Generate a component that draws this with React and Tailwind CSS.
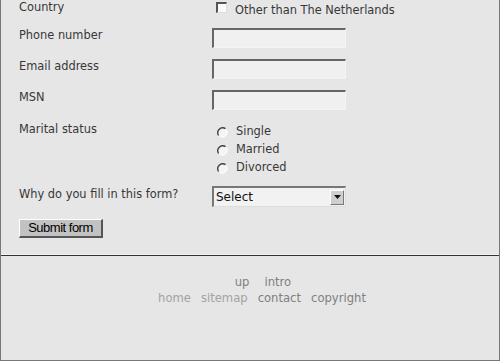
import React from 'react';

const font = { fontFamily: '"DejaVu Sans", Verdana, sans-serif' };

function TextBox() {
  return (
    <div className="w-[134px] h-[20px] bg-[#f0f0f0] border-t-2 border-l-2 border-t-[#666] border-l-[#666] border-r border-b border-r-[#f4f4f4] border-b-[#f4f4f4]" />
  );
}

function Radio({ label }) {
  return (
    <div className="flex items-center h-[18px]">
      <svg width="11" height="11" viewBox="0 0 11 11" className="ml-[5px] mr-[8px]">
        <circle cx="5.5" cy="5.5" r="5" fill="#f4f4f4" />
        <path d="M8.5 1.6 A5 5 0 0 0 1.6 8.5" fill="none" stroke="#444" strokeWidth="1.4" />
        <path d="M9.4 2.5 A5 5 0 0 1 2.5 9.4" fill="none" stroke="#fff" strokeWidth="1" />
      </svg>
      <span>{label}</span>
    </div>
  );
}

export default function App() {
  const labelClass = 'w-[193px] shrink-0 leading-[15px]';

  return (
    <div
      className="w-[500px] h-[361px] bg-[#e6e6e6] border-l border-r border-b border-[#777] text-[11.4px] text-[#383838] overflow-hidden"
      style={font}
    >
      {/* Form */}
      <div className="h-[254px] pl-[18px]">
        <div className="flex h-[17px]">
          <div className={labelClass}>Country</div>
          <div className="flex items-start">
            <div className="mt-[2px] ml-[4px] mr-[8px] w-[11px] h-[11px] bg-[#fafafa] border-t-2 border-l-2 border-t-[#555] border-l-[#555] border-r border-b border-r-[#ddd] border-b-[#ddd]" />
            <span className="leading-[20px]">Other than The Netherlands</span>
          </div>
        </div>

        <div className="flex mt-[11px] h-[20px]">
          <div className={labelClass}>Phone number</div>
          <TextBox />
        </div>

        <div className="flex mt-[11px] h-[20px]">
          <div className={labelClass}>Email address</div>
          <TextBox />
        </div>

        <div className="flex mt-[11px] h-[20px]">
          <div className={labelClass}>MSN</div>
          <TextBox />
        </div>

        <div className="flex mt-[12px]">
          <div className={labelClass}>Marital status</div>
          <div className="flex flex-col pt-[1px]">
            <Radio label="Single" />
            <Radio label="Married" />
            <Radio label="Divorced" />
          </div>
        </div>

        <div className="flex mt-[9px] h-[21px]">
          <div className={`${labelClass} pt-[1px]`}>Why do you fill in this form?</div>
          <div className="w-[134px] h-[21px] flex items-center bg-[#f2f2f2] border-t-2 border-l-2 border-t-[#777] border-l-[#777] border-r border-b border-r-[#ddd] border-b-[#ddd]">
            <span className="flex-1 pl-[2px] text-[12px] text-[#111]">Select</span>
            <div className="w-[14px] h-[15px] mr-[1px] bg-[#cfcfcf] border-t border-l border-t-white border-l-white border-r border-b border-r-[#777] border-b-[#777] flex items-center justify-center">
              <svg width="7" height="4" viewBox="0 0 7 4">
                <path d="M0 0 H7 L3.5 4 Z" fill="#111" />
              </svg>
            </div>
          </div>
        </div>

        <button
          type="button"
          className="mt-[12px] block w-[84px] h-[19px] bg-[#c2c2c2] border-t border-l border-t-white border-l-white border-r-2 border-b-2 border-r-[#555] border-b-[#555] text-[13px] text-black tracking-[-0.5px] leading-[14px]"
          style={{ fontFamily: '"Liberation Sans", Arial, sans-serif' }}
        >
          Submit form
        </button>
      </div>

      {/* Divider */}
      <div className="h-px bg-[#f4f4f4]" />
      <div className="h-px bg-[#333]" />

      {/* Footer */}
      <div className="pt-[18px] flex flex-col items-center text-[11.6px] leading-[16px]">
        <div className="flex gap-[15px] text-[#808080] ml-[26px]">
          <span>up</span>
          <span>intro</span>
        </div>
        <div className="flex gap-[10px] ml-[24px]">
          <span className="text-[#a3a3a3]">home</span>
          <span className="text-[#a3a3a3]">sitemap</span>
          <span className="text-[#808080]">contact</span>
          <span className="text-[#808080]">copyright</span>
        </div>
      </div>
    </div>
  );
}
